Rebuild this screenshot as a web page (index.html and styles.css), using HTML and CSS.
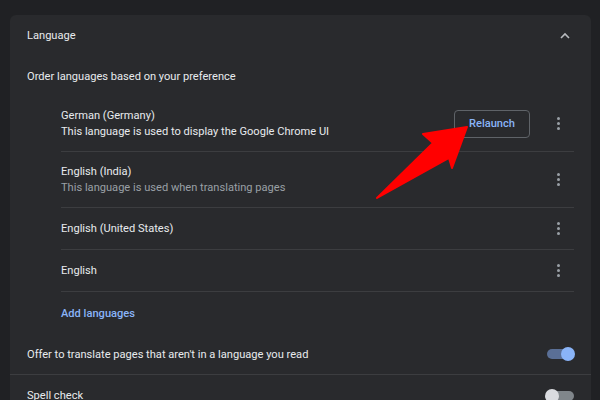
FILE: index.html
```html
<!DOCTYPE html>
<html lang="en">
<head>
<meta charset="utf-8">
<title>Language settings</title>
<link rel="stylesheet" href="styles.css">
</head>
<body>
<div class="page">
  <section class="card">
    <div class="header">
      <span>Language</span>
      <svg class="chevron" width="20" height="20" viewBox="0 0 20 20"><path d="M6 12 L10 8 L14 12" fill="none" stroke="#b8bbbf" stroke-width="1.6"/></svg>
    </div>
    <div class="label-row">Order languages based on your preference</div>
    <div class="lang-list">
      <div class="lang-row two">
        <div class="lang-text">
          <div class="name">German (Germany)</div>
          <div class="desc bright">This language is used to display the Google Chrome UI</div>
        </div>
        <button class="relaunch">Relaunch</button>
        <span class="kebab"><i></i><i></i><i></i></span>
      </div>
      <div class="lang-row two">
        <div class="lang-text">
          <div class="name">English (India)</div>
          <div class="desc">This language is used when translating pages</div>
        </div>
        <span class="kebab"><i></i><i></i><i></i></span>
      </div>
      <div class="lang-row">
        <div class="lang-text"><div class="name">English (United States)</div></div>
        <span class="kebab"><i></i><i></i><i></i></span>
      </div>
      <div class="lang-row">
        <div class="lang-text"><div class="name">English</div></div>
        <span class="kebab"><i></i><i></i><i></i></span>
      </div>
      <div class="add-row"><a class="add-link">Add languages</a></div>
    </div>
    <div class="toggle-row sep">
      <span>Offer to translate pages that aren't in a language you read</span>
      <span class="toggle on"><span class="knob"></span></span>
    </div>
    <div class="toggle-row">
      <span>Spell check</span>
      <span class="toggle"><span class="knob"></span></span>
    </div>
  </section>
  <svg class="arrow" width="100" height="80" viewBox="370 122 100 80">
    <path d="M467 127 L423 134 L433 143 L377 198 L449 158 L452 168 Z" fill="#ff0000" stroke="#ff0000" stroke-width="2" stroke-linejoin="round"/>
  </svg>
</div>
</body>
</html>
```

FILE: styles.css
```css
* { box-sizing: border-box; }
html, body {
  margin: 0;
  padding: 0;
  background: #202124;
  height: 100%;
  overflow: hidden;
}
body {
  font-family: Roboto, "Liberation Sans", Arial, sans-serif;
  font-size: 11.1px;
  color: #e8eaed;
}
.page {
  position: relative;
  padding: 15px 9px 0 10px;
}
.card {
  background: #292a2d;
  border-radius: 6px 6px 0 0;
  min-height: 420px;
}
.header {
  height: 41px;
  display: flex;
  align-items: center;
  justify-content: space-between;
  padding: 0 16px 0 17px;
}
.chevron { display: block; }
.label-row {
  height: 40px;
  display: flex;
  align-items: center;
  padding: 0 17px;
}
.lang-list {
  margin: 0 17px 0 51px;
}
.lang-row {
  display: flex;
  align-items: center;
  height: 42px;
  border-bottom: 1px solid #3c3d40;
}
.lang-row.two { height: 56px; }
.lang-text { flex: 1; line-height: 16px; }
.desc { color: #9aa0a6; }
.desc.bright { color: #e8eaed; }
.relaunch {
  width: 76px;
  height: 28px;
  border: 1px solid #5f6368;
  border-radius: 4px;
  background: transparent;
  color: #8ab4f8;
  font-family: inherit;
  font-size: 11.1px;
  font-weight: 500;
  margin-right: 12px;
  padding: 0;
}
.kebab {
  width: 32px;
  height: 20px;
  display: flex;
  flex-direction: column;
  align-items: center;
  justify-content: center;
  gap: 2px;
}
.kebab i {
  display: block;
  width: 3px;
  height: 3px;
  border-radius: 50%;
  background: #9aa0a6;
}
.add-row {
  height: 42px;
  display: flex;
  align-items: center;
}
.add-link {
  color: #8ab4f8;
  font-weight: 500;
}
.toggle-row {
  display: flex;
  align-items: center;
  justify-content: space-between;
  height: 41px;
  padding: 0 17px;
}
.toggle-row.sep { border-bottom: 1px solid #3c3d40; }
.toggle {
  position: relative;
  width: 27px;
  height: 10px;
  border-radius: 5px;
  background: #80868b;
}
.toggle .knob {
  position: absolute;
  top: -2px;
  left: -2px;
  width: 14px;
  height: 14px;
  border-radius: 50%;
  background: #dadce0;
}
.toggle.on { background: #5a6f96; }
.toggle.on .knob {
  left: auto;
  right: -1px;
  background: #8ab4f8;
}
.arrow {
  position: absolute;
  left: 370px;
  top: 122px;
}
```
